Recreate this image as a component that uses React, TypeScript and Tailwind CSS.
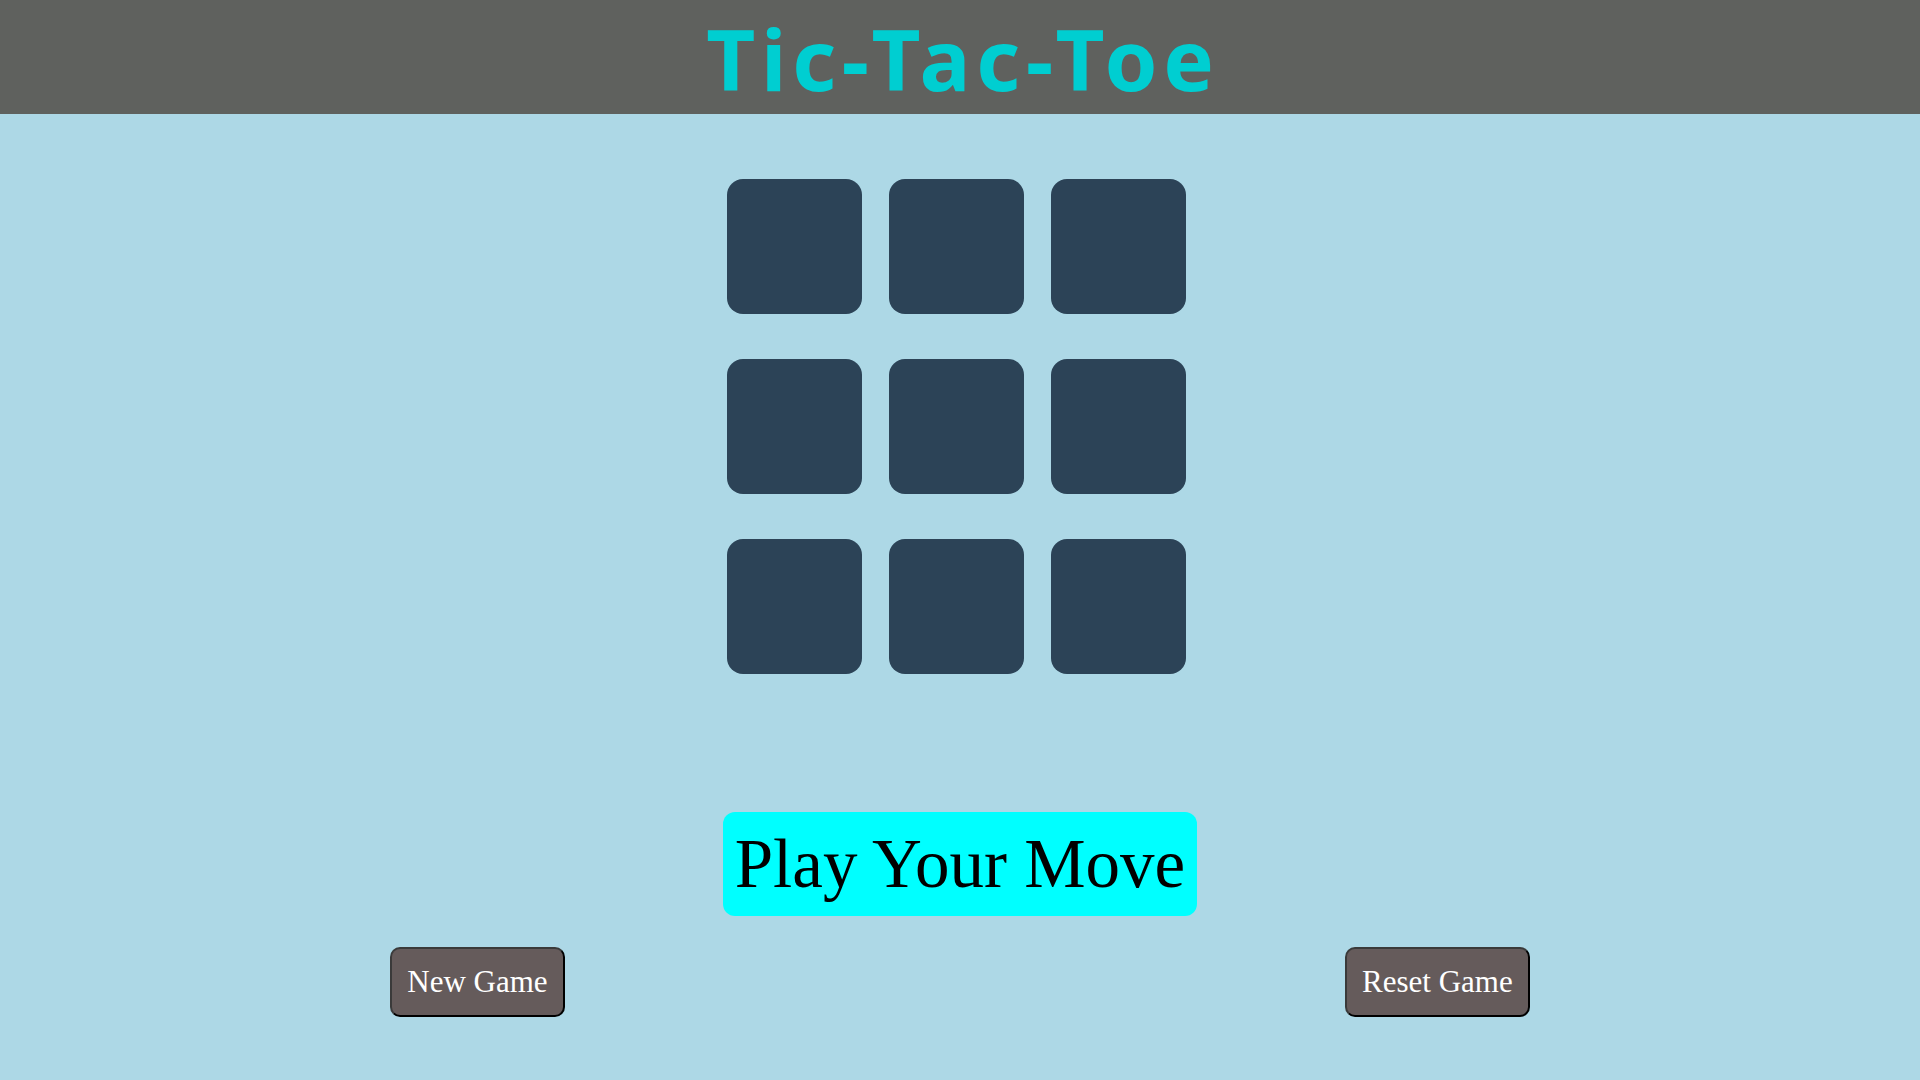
import React from "react";

export default function App() {
  const cells = Array.from({ length: 9 });
  return (
    <div className="min-h-[1080px] w-full bg-[#add8e6] flex flex-col">
      <header className="h-[114px] bg-[#5f615e] flex justify-center items-start">
        <h1
          className="pt-[16px] pl-[6px] text-[85px] leading-[85px] font-bold tracking-[5.8px] text-[#00ced1]"
          style={{ fontFamily: '"Comic Sans MS", "Noto Sans", sans-serif' }}
        >
          Tic-Tac-Toe
        </h1>
      </header>
      <div className="mt-[65px] flex justify-center pr-[7px]">
        <div className="grid grid-cols-[135px_135px_135px] gap-x-[27px] gap-y-[45px]">
          {cells.map((_, i) => (
            <button
              key={i}
              className="w-[135px] h-[135px] rounded-[16px] bg-[#2c4357]"
            />
          ))}
        </div>
      </div>
      <div className="mt-[138px] flex justify-center">
        <div
          className="bg-[#00ffff] rounded-[12px] px-[12px] py-[13px] text-[69px] leading-[78px] text-black"
          style={{ fontFamily: '"Liberation Serif", "Times New Roman", serif' }}
        >
          Play Your Move
        </div>
      </div>
      <div className="mt-[31px] flex justify-around">
        <button
          className="bg-[#655b5b] text-white text-[31px] leading-[36px] px-[15px] py-[15px] rounded-[10px] border-2 border-t-[#3a3a3a] border-l-[#3a3a3a] border-b-black border-r-black"
          style={{ fontFamily: '"Liberation Serif", "Times New Roman", serif' }}
        >
          New Game
        </button>
        <button
          className="bg-[#655b5b] text-white text-[31px] leading-[36px] px-[15px] py-[15px] rounded-[10px] border-2 border-t-[#3a3a3a] border-l-[#3a3a3a] border-b-black border-r-black"
          style={{ fontFamily: '"Liberation Serif", "Times New Roman", serif' }}
        >
          Reset Game
        </button>
      </div>
    </div>
  );
}
